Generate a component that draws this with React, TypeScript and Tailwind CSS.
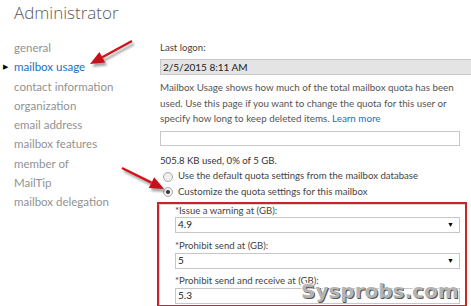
import React from "react";

const nav = [
  "general",
  "mailbox usage",
  "contact information",
  "organization",
  "email address",
  "mailbox features",
  "member of",
  "MailTip",
  "mailbox delegation",
];

function Arrow({ x1, y1, x2, y2 }: { x1: number; y1: number; x2: number; y2: number }) {
  const ang = Math.atan2(y2 - y1, x2 - x1);
  const len = 14;
  const w = 6;
  const bx = x2 - Math.cos(ang) * len;
  const by = y2 - Math.sin(ang) * len;
  const px = -Math.sin(ang) * w;
  const py = Math.cos(ang) * w;
  const pts = `${x2},${y2} ${bx + px},${by + py} ${bx - px},${by - py}`;
  return (
    <g>
      <g transform="translate(2,3)" opacity="0.35" filter="url(#blur)">
        <line x1={x1} y1={y1} x2={bx} y2={by} stroke="#000" strokeWidth="2.5" />
        <polygon points={pts} fill="#000" />
      </g>
      <line x1={x1} y1={y1} x2={bx} y2={by} stroke="#d0141a" strokeWidth="2.5" />
      <polygon points={pts} fill="#c8101a" />
    </g>
  );
}

function Select({ value, arrow = true }: { value: string; arrow?: boolean }) {
  return (
    <div className="flex h-[16px] items-center justify-between border border-[#c6c6c6] bg-white pl-[2px] pr-[5px] text-[10px] text-[#222]">
      <span>{value}</span>
      {arrow && <span className="text-[7px] leading-none text-black">▼</span>}
    </div>
  );
}

export default function App() {
  return (
    <div
      className="relative h-[306px] w-[471px] overflow-hidden bg-white"
      style={{ fontFamily: 'Lato, "Noto Sans", sans-serif' }}
    >
      <div className="flex">
        <div className="w-[160px] shrink-0 pl-[14px] pt-[2px]">
          <div
            className="text-[17px] font-light leading-[22px] text-[#5a5a5a]"
            style={{ fontFamily: '"Open Sans", sans-serif' }}
          >
            Administrator
          </div>
          <div className="mt-[14px] flex flex-col">
            {nav.map((n) => (
              <div
                key={n}
                className={`relative h-[19.3px] text-[11.5px] leading-[19px] ${
                  n === "mailbox usage" ? "text-[#2070c4]" : "text-[#929292]"
                }`}
              >
                {n === "mailbox usage" && (
                  <span className="absolute left-[-11px] top-0 text-[7px] text-black">▶</span>
                )}
                {n}
              </div>
            ))}
          </div>
        </div>
        <div className="flex-1 pt-[40px] text-[9.6px] text-[#444]">
          <div className="leading-[16px]">Last logon:</div>
          <div className="mt-[3px] flex h-[16px] w-[330px] items-center border border-[#c8c8c8] bg-[#e4e4e4] pl-[2px] text-[10px] text-[#222]">
            2/5/2015 8:11 AM
          </div>
          <div className="mt-[5px] whitespace-nowrap text-[9.8px] leading-[15.5px] text-[#555]">
            Mailbox Usage shows how much of the total mailbox quota has been
            <br />
            used. Use this page if you want to change the quota for this user or
            <br />
            specify how long to keep deleted items. <span className="text-[#2070c4]">Learn more</span>
          </div>
          <div className="mt-[4px] h-[15px] w-[300px] border border-[#c8c8c8] bg-white" />
          <div className="mt-[7px] leading-[16px] text-[#333]">505.8 KB used, 0% of 5 GB.</div>
          <div className="mt-[0px] flex flex-col">
            <label className="flex h-[16px] items-center gap-[5px] text-[#444]">
              <span className="ml-[3px] h-[10px] w-[10px] rounded-full border border-[#a8a8a8] bg-[#f0f0f0]" />
              Use the default quota settings from the mailbox database
            </label>
            <label className="flex h-[15px] items-center gap-[5px] text-[#444]">
              <span className="ml-[3px] flex h-[10px] w-[10px] items-center justify-center rounded-full border border-[#a8a8a8] bg-[#f0f0f0]">
                <span className="h-[4px] w-[4px] rounded-full bg-[#333]" />
              </span>
              Customize the quota settings for this mailbox
            </label>
          </div>
          <div className="ml-[-3px] mt-[2px] w-[310px] border-2 border-[#c8242b]">
            <div className="border-l border-t border-[#d8d8d8] pb-[1px] pl-[15px] pr-[5px]">
              <div className="leading-[12px]">*Issue a warning at (GB):</div>
              <Select value="4.9" />
              <div className="mt-[6px] leading-[14px]">*Prohibit send at (GB):</div>
              <Select value="5" />
              <div className="mt-[5px] leading-[14px]">*Prohibit send and receive at (GB):</div>
              <Select value="5.3" arrow={false} />
            </div>
          </div>
        </div>
      </div>

      <svg className="pointer-events-none absolute left-0 top-0" width="471" height="306">
        <defs>
          <filter id="blur">
            <feGaussianBlur stdDeviation="1.2" />
          </filter>
        </defs>
        <Arrow x1={132} y1={41} x2={90} y2={64} />
        <Arrow x1={122} y1={168} x2={164} y2={189} />
      </svg>

      <div
        className="pointer-events-none absolute left-[301px] top-[281px] text-[20px] font-bold leading-[20px] text-[#b4b4b4]"
        style={{
          fontFamily: '"DejaVu Sans", Verdana, sans-serif',
          textShadow: "1px 1px 0 #555, -1px -1px 0 #fff",
        }}
      >
        Sysprobs.com
      </div>
    </div>
  );
}
